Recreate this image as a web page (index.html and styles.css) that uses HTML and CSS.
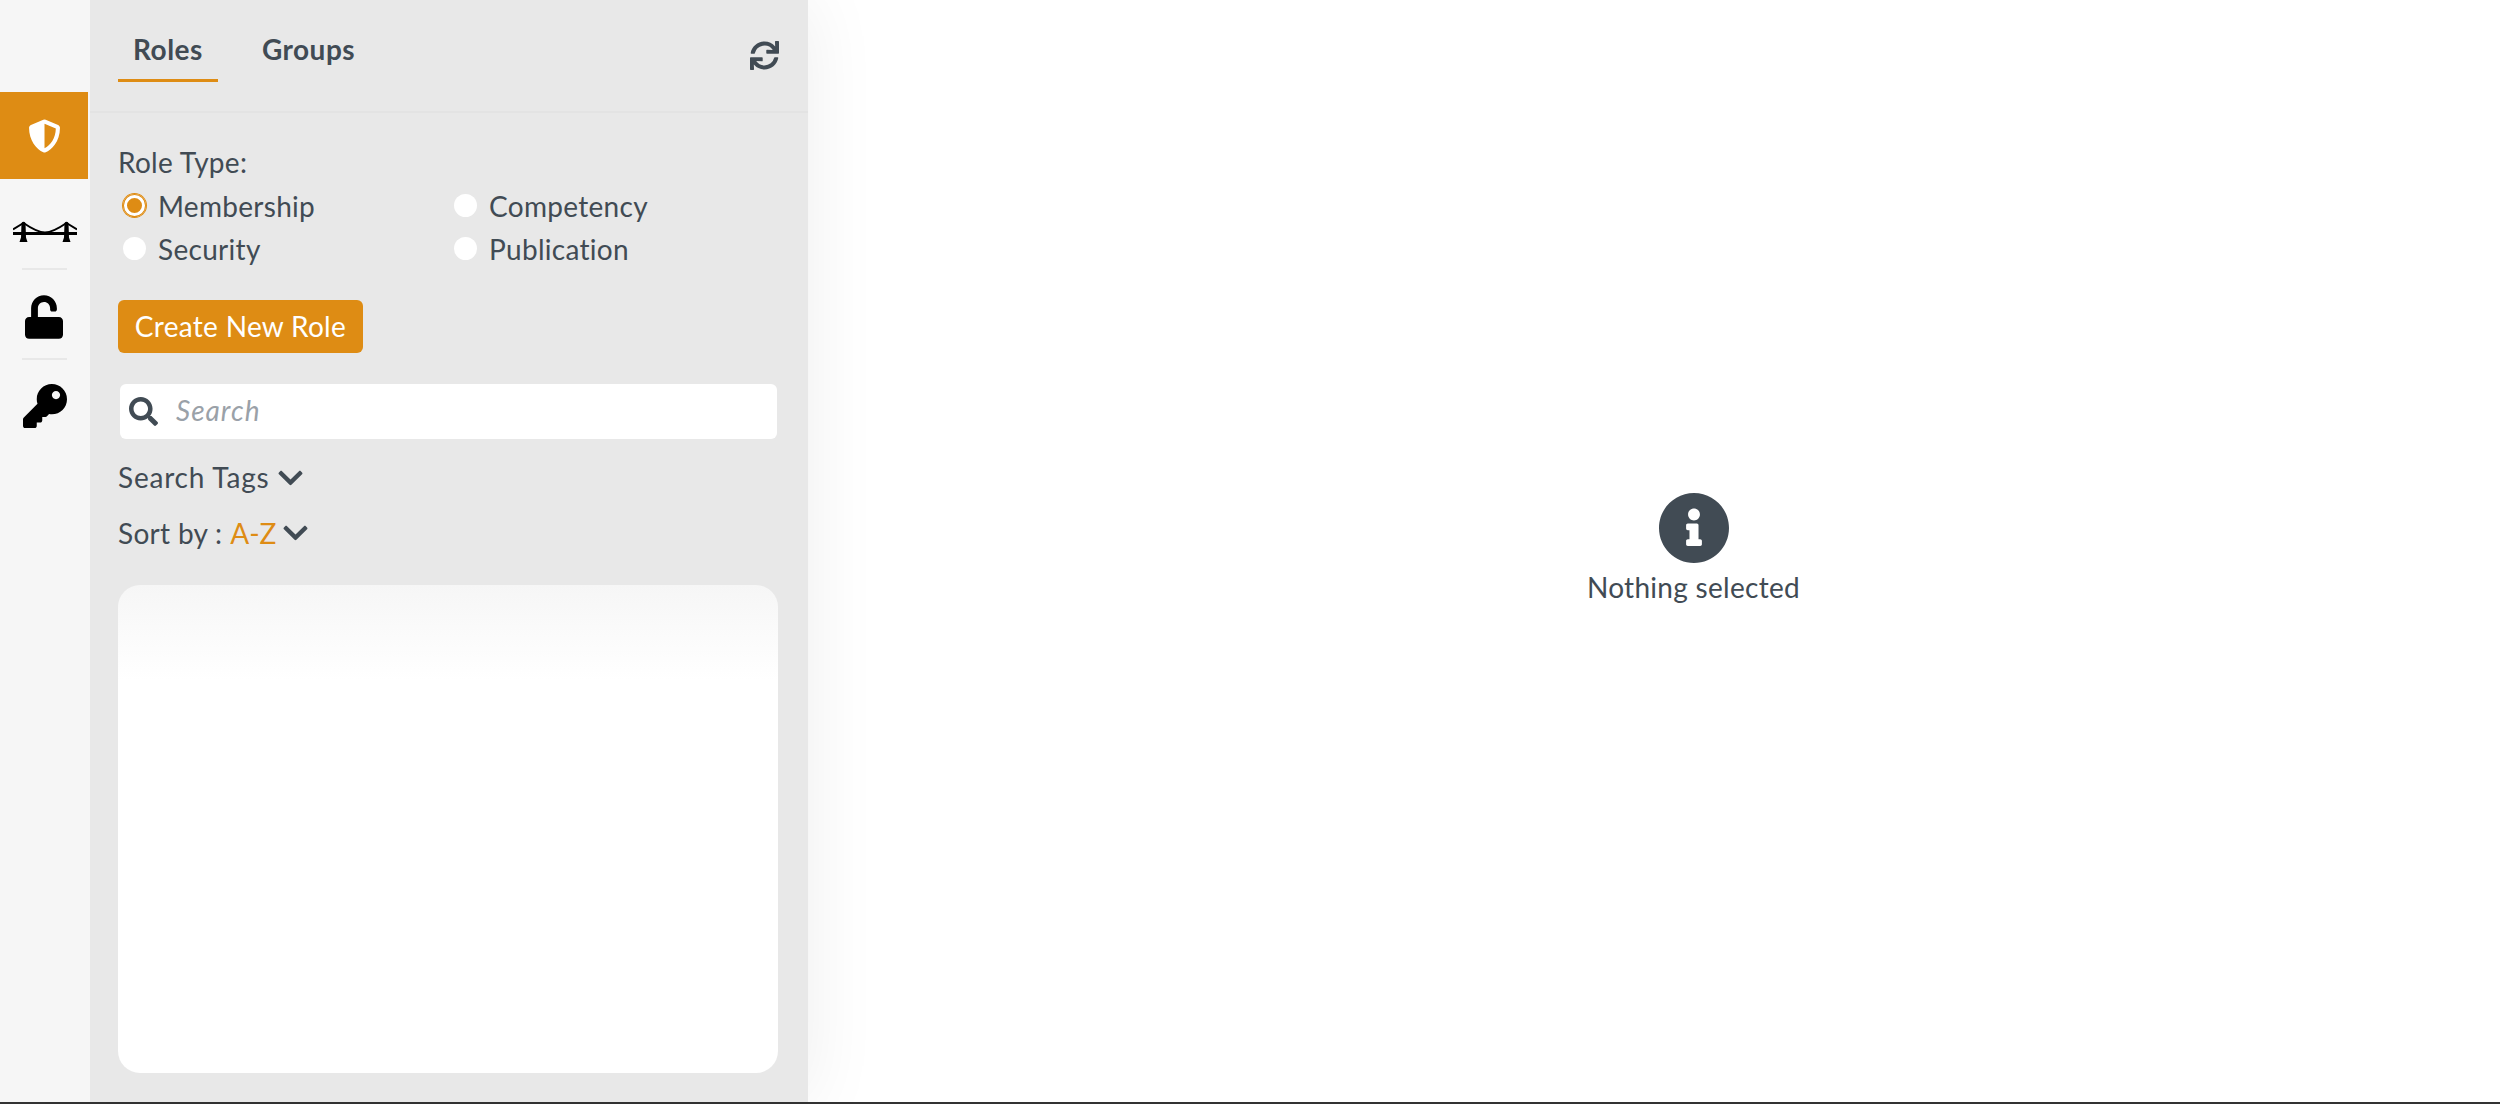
FILE: index.html
```html
<html>
    <head>
        <meta charset='utf-8'/>
        <title>Roles</title>
        <link rel="stylesheet" href="styles.css">
    </head>
    <body>
        <div class="app">
            <div class="rail">
                <div class="rail_item active">
                    <svg class="ic_shield" viewBox="0 0 512 512"><path d="M466.5 83.7l-192-80a48.15 48.15 0 0 0-36.9 0l-192 80C27.7 91.1 16 108.6 16 128c0 198.5 114.5 335.7 221.5 380.3 11.8 4.9 25.1 4.9 36.9 0C360.1 472.6 496 349.3 496 128c0-19.4-11.7-36.9-29.5-44.3zM256.1 446.3l-.1-381 175.9 73.3c-3.3 151.4-82.1 261.1-175.8 307.7z"/></svg>
                </div>
                <div class="rail_item bridge">
                    <svg class="ic_bridge" viewBox="0 0 64 21">
                        <path class="deck" d="M0 12.500H64"/>
                        <path class="deck thin" d="M0 8.500L10.500 2M53.500 2L64 8.500"/>
                        <path class="deck thin" d="M10.500 2C20 8.500 26 11.500 32 11.500S44 8.500 53.500 2"/>
                        <path d="M8.500 2Q10.500 -0.500 12.500 2L13 16.500L14.500 21H6.500L8 16.500ZM51.500 2Q53.500 -0.500 55.500 2L56 16.500L57.500 21H49.500L51 16.500Z"/>
                    </svg>
                </div>
                <div class="rail_item lock">
                    <svg class="ic_lock" viewBox="0 0 448 512"><path d="M400 256H152V152.9c0-39.6 31.7-72.5 71.3-72.9 40-.4 72.7 32.1 72.7 72v16c0 13.3 10.7 24 24 24h32c13.3 0 24-10.7 24-24v-16C376 68 307.5-.3 223.5 0 139.5.3 72 69.5 72 153.5V256H48c-26.5 0-48 21.5-48 48v160c0 26.5 21.5 48 48 48h352c26.5 0 48-21.5 48-48V304c0-26.5-21.5-48-48-48z"/></svg>
                </div>
                <div class="rail_item key">
                    <svg class="ic_key" viewBox="0 0 512 512"><path d="M512 176.001C512 273.203 433.202 352 336 352c-11.22 0-22.19-1.062-32.827-3.069l-24.012 27.014A23.999 23.999 0 0 1 261.223 384H224v40c0 13.255-10.745 24-24 24h-40v40c0 13.255-10.745 24-24 24H24c-13.255 0-24-10.745-24-24v-78.059c0-6.365 2.529-12.47 7.029-16.971l161.802-161.802C163.108 213.814 160 195.271 160 176 160 78.798 238.797.001 335.999 0 433.488-.001 512 78.511 512 176.001zM336 128c0 26.51 21.49 48 48 48s48-21.49 48-48-21.49-48-48-48-48 21.49-48 48z"/></svg>
                </div>
            </div>

            <div class="panel">
                <div class="panel_head">
                    <div class="tabs">
                        <div class="tab selected">Roles</div>
                        <div class="tab">Groups</div>
                    </div>
                    <svg class="ic_refresh" viewBox="0 0 512 512"><path d="M440.65 12.57l4 82.77A247.16 247.16 0 0 0 255.83 8C134.73 8 33.91 94.92 12.29 209.82A12 12 0 0 0 24.09 224h49.05a12 12 0 0 0 11.67-9.26 175.91 175.91 0 0 1 317-56.94l-101.46-4.86a12 12 0 0 0-12.57 12v47.41a12 12 0 0 0 12 12H500a12 12 0 0 0 12-12V12a12 12 0 0 0-12-12h-47.37a12 12 0 0 0-11.98 12.57zM255.83 432a175.61 175.61 0 0 1-146-77.8l101.8 4.87a12 12 0 0 0 12.57-12v-47.4a12 12 0 0 0-12-12H12a12 12 0 0 0-12 12V500a12 12 0 0 0 12 12h47.35a12 12 0 0 0 12-12.6l-4.15-82.57A247.17 247.17 0 0 0 255.83 504c121.11 0 221.93-86.92 243.55-201.82a12 12 0 0 0-11.8-14.18h-49.05a12 12 0 0 0-11.67 9.26A175.86 175.86 0 0 1 255.83 432z"/></svg>
                </div>

                <div class="panel_body">
                    <div class="role_label">Role Type:</div>
                    <div class="role_grid">
                        <div class="radio"><span class="dot on"></span>Membership</div>
                        <div class="radio"><span class="dot"></span>Competency</div>
                        <div class="radio"><span class="dot"></span>Security</div>
                        <div class="radio"><span class="dot"></span>Publication</div>
                    </div>
                    <div class="btn_new">Create New Role</div>
                    <div class="search">
                        <svg class="ic_search" viewBox="0 0 512 512"><path d="M505 442.700L405.300 343c-4.500-4.500-10.600-7-17-7H372c27.600-35.300 44-79.700 44-128C416 93.100 322.900 0 208 0S0 93.100 0 208s93.100 208 208 208c48.300 0 92.700-16.400 128-44v16.300c0 6.400 2.500 12.500 7 17l99.700 99.700c9.400 9.400 24.600 9.400 33.900 0l28.300-28.300c9.400-9.400 9.400-24.600.1-34zM208 336c-70.700 0-128-57.200-128-128 0-70.700 57.200-128 128-128 70.700 0 128 57.200 128 128 0 70.700-57.200 128-128 128z"/></svg>
                        <span class="search_hint">Search</span>
                    </div>
                    <div class="drop tags">Search Tags
                        <svg class="ic_chev" viewBox="0 0 448 512"><path d="M207.029 381.476L12.686 187.132c-9.373-9.373-9.373-24.569 0-33.941l22.667-22.667c9.357-9.357 24.522-9.375 33.901-.04L224 284.505l154.745-154.021c9.379-9.335 24.544-9.317 33.901.04l22.667 22.667c9.373 9.373 9.373 24.569 0 33.941L240.971 381.476c-9.373 9.372-24.569 9.372-33.942 0z"/></svg>
                    </div>
                    <div class="drop sort">Sort by :<span class="sort_val">A-Z</span>
                        <svg class="ic_chev" viewBox="0 0 448 512"><path d="M207.029 381.476L12.686 187.132c-9.373-9.373-9.373-24.569 0-33.941l22.667-22.667c9.357-9.357 24.522-9.375 33.901-.04L224 284.505l154.745-154.021c9.379-9.335 24.544-9.317 33.901.04l22.667 22.667c9.373 9.373 9.373 24.569 0 33.941L240.971 381.476c-9.373 9.372-24.569 9.372-33.942 0z"/></svg>
                    </div>
                    <div class="list"></div>
                </div>
            </div>

            <div class="content">
                <svg class="ic_info" viewBox="8 8 496 496"><path d="M256 8C119.043 8 8 119.083 8 256c0 136.997 111.043 248 248 248s248-111.003 248-248C504 119.083 392.957 8 256 8zm0 110c23.196 0 42 18.804 42 42s-18.804 42-42 42-42-18.804-42-42 18.804-42 42-42zm56 254c0 6.627-5.373 12-12 12h-88c-6.627 0-12-5.373-12-12v-24c0-6.627 5.373-12 12-12h12v-64h-12c-6.627 0-12-5.373-12-12v-24c0-6.627 5.373-12 12-12h64c6.627 0 12 5.373 12 12v100h12c6.627 0 12 5.373 12 12v24z"/></svg>
                <div class="empty_text">Nothing selected</div>
            </div>
        </div>
    </body>
</html>
```

FILE: styles.css
```css
html, body {margin: 0; height: 100%; overflow: hidden;}
body {background-color: #ffffff; color: #414b54; font-family: "Lato", "Liberation Sans", sans-serif; font-size: 28px; letter-spacing: 0.3px;}
svg {display: block; fill: currentColor;}

.app {display: flex; height: 1102px; border-bottom: 2px solid #333333;}

/* left icon rail */
.rail {position: relative; z-index: 1; width: 90px; flex: none; padding-top: 92px; box-sizing: border-box; background-color: #f6f6f6; color: #000000;}
.rail_item {position: relative; display: flex; justify-content: center; width: 90px; height: 90px; box-sizing: border-box;}
.rail_item::after {content: ""; position: absolute; left: 22px; bottom: 0; width: 45px; height: 2px; background-color: #e8e8e8;}
.rail_item.active {width: 88px; height: 87px; align-items: center; background-color: #de8c14; color: #ffffff;}
.rail_item.active::after {display: none;}
.rail_item.bridge {height: 91px; padding-top: 42px;}
.rail_item.lock {padding-top: 25px;}
.rail_item.key {padding-top: 24px;}
.rail_item.key::after {display: none;}
.ic_shield {width: 33px; height: 34px;}
.ic_bridge {width: 64px; height: 21px; margin-left: -1px;}
.ic_bridge .deck {fill: none; stroke: #000000; stroke-width: 3;}
.ic_bridge .thin {stroke-width: 2;}
.ic_lock {width: 38px; height: 44px; margin-left: -2px;}
.ic_key {width: 44px; height: 44px; margin-left: -1px;}

/* roles panel */
.panel {position: relative; width: 718px; flex: none; background-color: #e8e8e8; box-shadow: 0 0 70px rgba(0, 0, 0, 0.07);}
.panel_head {display: flex; justify-content: space-between; height: 113px; padding: 0 28px; border-bottom: 2px solid #e3e3e3; box-sizing: border-box;}
.tabs {display: flex; gap: 29px;}
.tab {height: 82px; padding: 0 15px; box-sizing: border-box; font-weight: 700; line-height: 99px; letter-spacing: 0.5px;}
.tab.selected {border-bottom: 3px solid #de8c14;}
.ic_refresh {width: 29px; height: 29px; margin-top: 41px; margin-right: 1px;}

.panel_body {padding: 35px 28px 0 28px;}
.role_label {line-height: 28px; height: 30px;}
.role_grid {display: grid; grid-template-columns: 331px 1fr; grid-auto-rows: 43px; margin-top: 6px;}
.radio {display: flex; align-items: center; padding-left: 5px;}
.dot {width: 23px; height: 23px; margin-right: 12px; border-radius: 50%; background-color: #ffffff; flex: none;}
.dot.on {background-color: #de8c14; box-shadow: 0 0 0 1px #de8c14, inset 0 0 0 1px #de8c14, inset 0 0 0 4px #ffffff;}

.btn_new {display: flex; align-items: center; justify-content: center; width: 245px; height: 53px; padding-bottom: 2px; margin-top: 30px; border-radius: 6px; background-color: #de8c14; color: #ffffff; box-sizing: border-box;}

.search {display: flex; align-items: center; width: 657px; height: 55px; margin: 31px 0 0 2px; padding-left: 9px; border-radius: 6px; background-color: #ffffff; box-sizing: border-box;}
.ic_search {width: 29px; height: 29px;}
.search_hint {margin: -3px 0 0 18px; color: #9aa1a8; font-style: italic; letter-spacing: 1px;}

.drop {display: flex; align-items: center; height: 32px; padding-bottom: 2px; box-sizing: border-box; letter-spacing: 0.8px;}
.drop.tags {margin-top: 23px;}
.drop.sort {margin-top: 24px; letter-spacing: 0.3px;}
.sort_val {margin-left: 8px; color: #de8c14; letter-spacing: 0;}
.ic_chev {width: 25px; height: 28px; margin-left: 8px; margin-top: 1px;}
.sort .ic_chev {margin-left: 7px; margin-top: -1px;}

.list {height: 488px; margin-top: 35px; width: 660px; border-radius: 22px; background: linear-gradient(#f6f6f6, #ffffff 95px);}

/* right side */
.content {flex: 1; display: flex; flex-direction: column; align-items: center; padding: 493px 0 0 79px;}
.ic_info {width: 70px; height: 70px;}
.empty_text {margin-top: 7px;}
```
